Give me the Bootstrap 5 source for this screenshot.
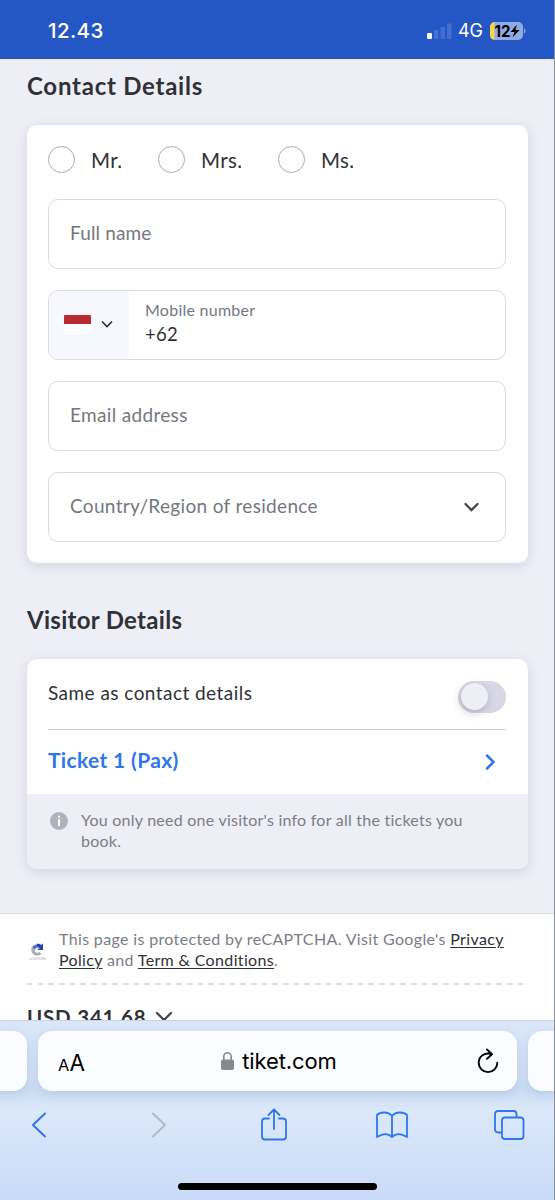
<!DOCTYPE html>
<html lang="en">
<head>
<meta charset="utf-8">
<meta name="viewport" content="width=device-width, initial-scale=1">
<title>Contact Details</title>
<link href="https://cdn.jsdelivr.net/npm/bootstrap@5.3.0/dist/css/bootstrap.min.css" rel="stylesheet">
<style>
body{font-family:Lato,"Liberation Sans",sans-serif;background:#eeeef7;color:#303136;height:1200px;overflow:hidden;font-size:19px;line-height:1.2;letter-spacing:.45px}
.phone{height:1200px;border-right:1px solid #8b8d97}
.statusbar{height:59px;background:#2457c5;color:#fff;font-family:Inter,sans-serif;letter-spacing:0;padding:3px 28px 0 48px}
.clock{font-size:20.5px;font-weight:500;letter-spacing:.4px}
.net{font-size:18px;font-weight:400;margin:0 7px 0 6px}
.page-main{height:854px;padding:13px 26px 0 27px}
.section-title{font-size:24px;font-weight:700;line-height:28px;margin:0;letter-spacing:.75px}
.visitor-title{letter-spacing:.3px;margin-top:43px;margin-bottom:25px}
.panel{background:#fff;border-radius:10px;box-shadow:0 3px 12px rgba(60,60,90,.15);overflow:hidden}
.contact-panel{height:438px;margin-top:25px;padding:21px 22px 0 21px}
.salutes{margin-bottom:25px}
.salute{font-size:20.5px;line-height:28px;gap:16px;letter-spacing:.35px}
.salute.first{width:110px}
.salute.second{width:120px}
.ring{width:27px;height:27px;border:1.4px solid #a9abb6;border-radius:50%}
.field{height:70px;border:1.5px solid #dadae6;border-radius:10px;margin-bottom:21px;color:#75777f;padding:0 20px 1px 21px;overflow:hidden;letter-spacing:.33px}
.field.short{letter-spacing:.15px}
.prefix{width:80px;background:#f7f8fd;padding:0 15px 2px;gap:10px}
.flag{width:27px;height:19px;flex:none;background:linear-gradient(#b92b30 50%,#fff 50%);border-radius:1px}
.caption-line{font-size:16px;line-height:20px;padding-top:9px;letter-spacing:.25px}
.dial-code{font-size:18.5px;line-height:28px;color:#303136}
.panel-body{padding:21px 22px 0 21px}
.same-row{height:50px;border-bottom:1px solid #cfcfe3}
.same-label{padding-top:2px}
.switch-track{width:48px;height:32px;border-radius:16px;background:#d7d7e5;padding:2px 3px;margin-top:1px}
.switch-knob{width:27px;height:27px;border-radius:50%;background:#eeeef7;box-shadow:-1px 3px 8px rgba(60,60,90,.25)}
.ticket{height:64px;color:#2f76ed;font-size:21px;font-weight:700;letter-spacing:.35px}
.ticket-name{padding-bottom:4px}
.note{height:75px;background:#eeeef7;color:#7b7d86;font-size:16px;line-height:21.5px;padding:14.5px 22px 0 23px;gap:13px;letter-spacing:.24px}
.note-icon{margin-top:3px}
.sheet{height:107px;background:#fff;border-top:1px solid #d9d9e1;overflow:hidden;padding:14px 28px 0 27px}
.legal{font-size:16px;line-height:21px;color:#7b7d86;gap:11px;height:55px;letter-spacing:.35px}
.legal a{color:#303136;text-decoration-thickness:1px;text-underline-offset:2px}
.captcha{margin-top:14px}
.dashes{height:1.5px;background:repeating-linear-gradient(90deg,#dcdce2 0 5.5px,transparent 5.5px 10.67px)}
.price{font-size:20.5px;font-weight:700;line-height:24px;margin-top:20px;letter-spacing:.8px;gap:8px}
.safari{height:180px;border-top:1px solid #c9d3e5;background:linear-gradient(#dbe7f9 0,#cbdcf3 70px,#dce9fb 90px,#d3e2f9 130px,#c9daf8 180px);padding-top:10px;font-family:Inter,sans-serif;letter-spacing:0;color:#000}
.tab-pill{height:60px;background:#fafcff;box-shadow:0 3px 10px rgba(90,120,170,.16)}
.pill-main{width:479px;border-radius:14px;padding:0 17px 0 20px}
.pill-left{width:27px;border-radius:0 14px 14px 0}
.pill-right{width:26px;border-radius:14px 0 0 14px}
.aa{font-size:22.5px;padding-top:2px}
.aa small{font-size:16.5px}
.site{font-size:22px;gap:8px;letter-spacing:-.1px;padding-right:3px}
.site span{padding-top:1px}
.tools{height:68px;padding:0 27px 0 21px}
.tool{width:36px}
.homebar{width:199px;height:7px;border-radius:4px;background:#000;margin:24px 0 0 178px}
svg{display:block;flex:none}
</style>
</head>
<body>
<div class="phone">
<header class="statusbar d-flex align-items-center justify-content-between">
 <span class="clock">12.43</span>
 <div class="d-flex align-items-center">
  <svg width="26" height="18" viewBox="0 0 26 18"><rect x="1" y="11" width="5" height="6" rx="1.2" fill="#fff"/><g fill="#4370d0"><rect x="8" y="8" width="4.5" height="9" rx="1.2"/><rect x="14.500" y="5" width="4.500" height="12" rx="1.2"/><rect x="21" y="1.500" width="4.500" height="15.500" rx="1.2"/></g></svg>
  <span class="net">4G</span>
  <svg width="36" height="18" viewBox="0 0 36 18"><defs><clipPath id="cell"><rect width="33" height="18" rx="5"/></clipPath></defs><g clip-path="url(#cell)"><rect width="33" height="18" fill="#8fabe1"/><rect width="4.500" height="18" fill="#f6d44b"/></g><path d="M34 6q3 3 0 6z" fill="#8fabe1"/><text x="4.500" y="14.700" font-size="16" font-weight="700" textLength="16" lengthAdjust="spacingAndGlyphs">12</text><path d="M27 2.500 20.500 10h4L22.500 15.500 29.500 8h-4.200z"/></svg>
 </div>
</header>
<main class="page-main">
 <h2 class="section-title">Contact Details</h2>
 <section class="panel contact-panel">
  <div class="salutes d-flex">
   <div class="salute first d-flex"><span class="ring"></span>Mr.</div>
   <div class="salute second d-flex"><span class="ring"></span>Mrs.</div>
   <div class="salute d-flex"><span class="ring"></span>Ms.</div>
  </div>
  <div class="field short d-flex align-items-center">Full name</div>
  <div class="field d-flex p-0">
   <div class="prefix d-flex align-items-center"><span class="flag"></span><svg width="12" height="8" viewBox="0 0 12 8" fill="none" stroke="#303136" stroke-width="1.700"><path d="M1 1.500 6 6.500 11 1.500"/></svg></div>
   <div class="ps-3"><div class="caption-line">Mobile number</div><div class="dial-code">+62</div></div>
  </div>
  <div class="field d-flex align-items-center">Email address</div>
  <div class="field d-flex align-items-center justify-content-between"><span>Country/Region of residence</span><svg width="28" height="10" viewBox="0 0 28 10" fill="none" stroke="#43444b" stroke-width="2.300" stroke-linecap="round"><path d="M8.500 2 14.500 8 20.500 2"/></svg></div>
 </section>
 <h2 class="section-title visitor-title">Visitor Details</h2>
 <section class="panel">
  <div class="panel-body">
   <div class="same-row d-flex justify-content-between"><span class="same-label">Same as contact details</span><div class="switch-track"><div class="switch-knob"></div></div></div>
   <div class="ticket d-flex align-items-center justify-content-between"><span class="ticket-name">Ticket 1 (Pax)</span><svg width="21" height="18" viewBox="0 0 21 18" fill="none" stroke="#2f76ed" stroke-width="2.500" stroke-linecap="round"><path d="M2 2.500 8.500 9 2 15.500"/></svg></div>
  </div>
  <div class="note d-flex"><svg class="note-icon" width="18" height="18" viewBox="0 0 18 18"><circle cx="9" cy="9" r="9" fill="#b0b1bf"/><path d="M8 3.800h2v2H8zM8 7.300h2v6.700H8z" fill="#fff"/></svg><div>You only need one visitor's info for all the tickets you<br>book.</div></div>
 </section>
</main>
<section class="sheet">
 <div class="legal d-flex"><svg class="captcha" width="21" height="19" viewBox="0 0 21 19"><path d="M4.500 7.500A6 6 0 0 1 14 3.500l2-2V8H10l2-2a3 3 0 0 0-4 1.500z" fill="#4a70d8"/><path d="M4.500 5v4.500a6 5.500 0 0 0 10 2.500l-2-2a3 3 0 0 1-5-2H9.500z" fill="#a9adb7"/><path d="M10 1.500q3 0 4.500 1.500L16 1.500V8h-4l1.500-2Q12 4.500 10 4.500z" fill="#1f44b4"/><text x="2" y="18" font-size="4" letter-spacing="0" textLength="17" fill="#c2c2c6">reCAPTCHA</text></svg><div>This page is protected by reCAPTCHA. Visit Google's <a href="#">Privacy</a><br><a href="#">Policy</a> and <a href="#">Term &amp; Conditions</a>.</div></div>
 <div class="dashes"></div>
 <div class="price d-flex align-items-center"><span>USD 341.68</span><svg width="20" height="12" viewBox="0 0 20 12" fill="none" stroke="#43444b" stroke-width="2.200" stroke-linecap="round"><path d="M3 2 10 9 17 2"/></svg></div>
</section>
<footer class="safari">
 <div class="d-flex justify-content-between">
  <div class="tab-pill pill-left"></div>
  <div class="tab-pill pill-main d-flex align-items-center justify-content-between">
   <span class="aa"><small>A</small>A</span>
   <div class="site d-flex align-items-center"><svg width="13" height="18" viewBox="0 0 13 18"><rect y="7.500" width="13" height="10.500" rx="2" fill="#85888c"/><path d="M2.800 8V4.500a3.700 3.700 0 0 1 7.400 0V8" fill="none" stroke="#85888c" stroke-width="1.600"/></svg><span>tiket.com</span></div>
   <svg width="24" height="26" viewBox="0 0 24 26" fill="none" stroke="#000" stroke-width="1.900" stroke-linecap="round" stroke-linejoin="round"><path d="M15.500 6C8.500 4 2.700 8.500 2.700 14.800A9.300 9.300 0 0 0 21.300 14.800M11 1.500 16 6.300 11 10.800"/></svg>
  </div>
  <div class="tab-pill pill-right"></div>
 </div>
 <div class="tools d-flex align-items-center justify-content-between">
  <div class="tool d-flex justify-content-center"><svg width="18" height="26" viewBox="0 0 18 26" fill="none" stroke="#3075ee" stroke-width="2" stroke-linecap="round" stroke-linejoin="round"><path d="M15 1.500 3 13 15 24.500"/></svg></div>
  <div class="tool d-flex justify-content-center ps-1"><svg width="18" height="26" viewBox="0 0 18 26" fill="none" stroke="#b1b9c7" stroke-width="2" stroke-linecap="round" stroke-linejoin="round"><path d="M3 1.500 15 13 3 24.500"/></svg></div>
  <div class="tool d-flex justify-content-center"><svg width="28" height="34" viewBox="0 0 28 34" fill="none" stroke="#3075ee" stroke-width="1.800" stroke-linecap="round" stroke-linejoin="round"><path d="M9 10.500H5a3 3 0 0 0-3 3v15a3 3 0 0 0 3 3h18a3 3 0 0 0 3-3v-15a3 3 0 0 0-3-3h-4M14 21V1.500M8.500 7 14 1.500 19.500 7"/></svg></div>
  <div class="tool d-flex justify-content-center"><svg width="34" height="28" viewBox="0 0 34 28" fill="none" stroke="#3075ee" stroke-width="1.800" stroke-linecap="round" stroke-linejoin="round"><path d="M17 5C13 0 5 1 2 4V26C7 23 13 22 17 26 21 22 27 23 32 26V4C29 1 21 0 17 5V26"/></svg></div>
  <div class="tool d-flex justify-content-center"><svg width="32" height="32" viewBox="0 0 32 32" fill="none" stroke="#3075ee" stroke-width="1.800"><rect x="9" y="8.500" width="21.500" height="21.500" rx="3"/><path d="M9 23.500H5a3 3 0 0 1-3-3V5a3 3 0 0 1 3-3H20.500a3 3 0 0 1 3 3V8.500"/></svg></div>
 </div>
 <div class="homebar"></div>
</footer>
</div>
<script src="https://cdn.jsdelivr.net/npm/bootstrap@5.3.0/dist/js/bootstrap.bundle.min.js"></script>
</body>
</html>
